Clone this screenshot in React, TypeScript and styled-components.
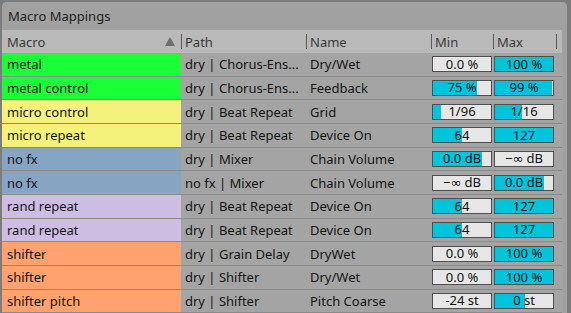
import { FC } from 'react'
import styled, { createGlobalStyle } from 'styled-components'

interface IMapping {
  macro: string
  color: string
  path: string
  name: string
  min: string
  minFill: number
  max: string
  maxFill: number
}

const GREEN = '#1bff38'
const YELLOW = '#f5f27c'
const BLUE = '#86a5c3'
const LILAC = '#cdbde3'
const ORANGE = '#ffa26f'

const mappings: IMapping[] = [
  { macro: 'metal', color: GREEN, path: 'dry | Chorus-Ens...', name: 'Dry/Wet', min: '0.0 %', minFill: 0, max: '100 %', maxFill: 1 },
  { macro: 'metal control', color: GREEN, path: 'dry | Chorus-Ens...', name: 'Feedback', min: '75 %', minFill: 0.75, max: '99 %', maxFill: 0.99 },
  { macro: 'micro control', color: YELLOW, path: 'dry | Beat Repeat', name: 'Grid', min: '1/96', minFill: 0.14, max: '1/16', maxFill: 0.46 },
  { macro: 'micro repeat', color: YELLOW, path: 'dry | Beat Repeat', name: 'Device On', min: '64', minFill: 0.5, max: '127', maxFill: 1 },
  { macro: 'no fx', color: BLUE, path: 'dry | Mixer', name: 'Chain Volume', min: '0.0 dB', minFill: 0.84, max: '\u2212\u221e dB', maxFill: 0 },
  { macro: 'no fx', color: BLUE, path: 'no fx | Mixer', name: 'Chain Volume', min: '\u2212\u221e dB', minFill: 0, max: '0.0 dB', maxFill: 0.84 },
  { macro: 'rand repeat', color: LILAC, path: 'dry | Beat Repeat', name: 'Device On', min: '64', minFill: 0.5, max: '127', maxFill: 1 },
  { macro: 'rand repeat', color: LILAC, path: 'dry | Beat Repeat', name: 'Device On', min: '64', minFill: 0.5, max: '127', maxFill: 1 },
  { macro: 'shifter', color: ORANGE, path: 'dry | Grain Delay', name: 'DryWet', min: '0.0 %', minFill: 0, max: '100 %', maxFill: 1 },
  { macro: 'shifter', color: ORANGE, path: 'dry | Shifter', name: 'Dry/Wet', min: '0.0 %', minFill: 0, max: '100 %', maxFill: 1 },
  { macro: 'shifter pitch', color: ORANGE, path: 'dry | Shifter', name: 'Pitch Coarse', min: '-24 st', minFill: 0, max: '0 st', maxFill: 0.51 },
]

const ValueBox: FC<{ label: string; fill: number }> = ({ label, fill }) => (
  <Box $fill={fill}>
    <span>{label}</span>
  </Box>
)

export default function App() {
  return (
    <>
      <GlobalStyle />
      <Panel>
        <TitleBar>Macro Mappings</TitleBar>
        <Table>
          <HeaderRow>
            <HeaderCell>
              Macro
              <SortArrow />
            </HeaderCell>
            <HeaderCell $sep>Path</HeaderCell>
            <HeaderCell $sep>Name</HeaderCell>
            <HeaderCell $sep>Min</HeaderCell>
            <HeaderCell $sep>Max</HeaderCell>
            <HeaderCell $sep />
          </HeaderRow>
          {mappings.map((m, i) => (
            <Row key={i}>
              <MacroCell $color={m.color}>{m.macro}</MacroCell>
              <Cell>{m.path}</Cell>
              <Cell>{m.name}</Cell>
              <BoxCell>
                <ValueBox label={m.min} fill={m.minFill} />
              </BoxCell>
              <BoxCell>
                <ValueBox label={m.max} fill={m.maxFill} />
              </BoxCell>
              <Cell />
            </Row>
          ))}
        </Table>
      </Panel>
    </>
  )
}

const GlobalStyle = createGlobalStyle`
  html, body {
    margin: 0;
    padding: 0;
    background: #7c7c7c;
    overflow: hidden;
  }
  body {
    font-family: 'Noto Sans', 'DejaVu Sans', sans-serif;
    font-size: 13px;
    color: #141414;
  }
`

const Panel = styled.div`
  margin: 2px 4px 0 2px;
  height: 311px;
  background: #a0a0a0;
  border-radius: 5px 5px 0 0;
  overflow: hidden;
`

const TitleBar = styled.div`
  height: 28px;
  display: flex;
  align-items: center;
  padding-left: 6px;
  background: #a1a1a1;
  color: #1f1f1f;
`

const Table = styled.div`
  width: 560px;
`

const COLUMNS = '179px 125px 125px 62px 63px 6px'

const HeaderRow = styled.div`
  display: grid;
  grid-template-columns: ${COLUMNS};
  height: 23px;
  background: #b9b9b9;
  color: #3a3a3a;
`

const HeaderCell = styled.div<{ $sep?: boolean }>`
  position: relative;
  display: flex;
  align-items: center;
  padding-left: ${(p) => (p.$sep ? '4px' : '5px')};
  &::before {
    content: '';
    display: ${(p) => (p.$sep ? 'block' : 'none')};
    position: absolute;
    left: 0;
    top: 4px;
    bottom: 4px;
    width: 1px;
    background: #5a5a5a;
  }
`

const SortArrow = styled.span`
  margin-left: auto;
  margin-right: 6px;
  width: 0;
  height: 0;
  border-left: 5px solid transparent;
  border-right: 5px solid transparent;
  border-bottom: 9px solid #6f6f6f;
`

const Row = styled.div`
  display: grid;
  grid-template-columns: ${COLUMNS};
  height: 23.67px;
  box-sizing: border-box;
  border-bottom: 1px solid #8a8a8a;
  background: #a4a4a4;
`

const Cell = styled.div`
  display: flex;
  align-items: center;
  padding-left: 4px;
  white-space: nowrap;
  overflow: hidden;
`

const MacroCell = styled(Cell)<{ $color: string }>`
  padding-left: 5px;
  background: ${(p) => p.$color};
`

const BoxCell = styled.div`
  display: flex;
  align-items: center;
  padding-left: 1px;
`

const Box = styled.div<{ $fill: number }>`
  box-sizing: border-box;
  width: 60px;
  height: 16px;
  border: 1px solid #4e4e4e;
  background: ${(p) =>
    `linear-gradient(to right, #00c4dc ${p.$fill * 100}%, #e6e6e6 ${p.$fill * 100}%)`};
  display: flex;
  align-items: center;
  justify-content: center;
  line-height: 1;
  color: #111;
`
